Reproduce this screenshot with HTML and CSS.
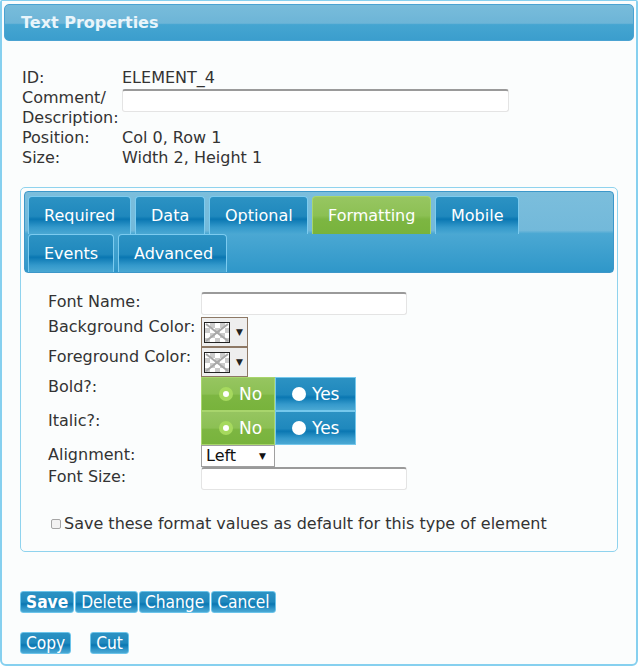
FILE: index.html
```html
<!DOCTYPE html>
<html lang="en">
<head>
  <meta charset="UTF-8">
  <title>Text Properties</title>
  <link rel="stylesheet" href="styles.css">
</head>
<body>
  <div class="dialog">
    <div class="titlebar">Text Properties</div>

    <div class="info">
      <span>ID:</span><span>ELEMENT_4</span>
      <span>Comment/<br>Description:</span><span><input type="text" class="txt comment"></span>
      <span>Position:</span><span>Col 0, Row 1</span>
      <span>Size:</span><span>Width 2, Height 1</span>
    </div>

    <div class="tabbox">
      <div class="tabbar">
        <a class="tab">Required</a>
        <a class="tab">Data</a>
        <a class="tab">Optional</a>
        <a class="tab on">Formatting</a>
        <a class="tab">Mobile</a>
        <span class="break"></span>
        <a class="tab">Events</a>
        <a class="tab">Advanced</a>
      </div>

      <div class="form">
        <label>Font Name:</label>
        <div><input type="text" class="txt field"></div>

        <label>Background Color:</label>
        <div><span class="swatch"><span class="chip"><svg width="24" height="19" viewBox="0 0 24 19"><line x1="1" y1="1" x2="23" y2="18" stroke="#a8a8a8" stroke-width="2"/><line x1="23" y1="1" x2="1" y2="18" stroke="#a8a8a8" stroke-width="2"/></svg></span><span class="caret">&#9660;</span></span></div>

        <label>Foreground Color:</label>
        <div><span class="swatch"><span class="chip"><svg width="24" height="19" viewBox="0 0 24 19"><line x1="1" y1="1" x2="23" y2="18" stroke="#a8a8a8" stroke-width="2"/><line x1="23" y1="1" x2="1" y2="18" stroke="#a8a8a8" stroke-width="2"/></svg></span><span class="caret">&#9660;</span></span></div>

        <label>Bold?:</label>
        <div class="toggle"><span class="opt no"><i class="dot"></i>No</span><span class="opt yes"><i class="dot"></i>Yes</span></div>

        <label>Italic?:</label>
        <div class="toggle"><span class="opt no"><i class="dot"></i>No</span><span class="opt yes"><i class="dot"></i>Yes</span></div>

        <label>Alignment:</label>
        <div><span class="select">Left<span class="arr">&#9660;</span></span></div>

        <label>Font Size:</label>
        <div><input type="text" class="txt field"></div>
      </div>

      <div class="default"><span class="check"></span>Save these format values as default for this type of element</div>
    </div>

    <div class="actions">
      <a class="btn bold">Save</a><a class="btn">Delete</a><a class="btn">Change</a><a class="btn">Cancel</a>
    </div>
    <div class="actions second">
      <a class="btn">Copy</a><a class="btn">Cut</a>
    </div>
  </div>
</body>
</html>
```

FILE: styles.css
```css
* {margin: 0; padding: 0; box-sizing: border-box;}
body {
  background: #fff;
  font-family: "DejaVu Sans", Verdana, sans-serif;
  font-size: 16px;
  color: #333;
}
.dialog {
  width: 638px;
  height: 666px;
  border: 2px solid #86d0ef;
  border-top-width: 1px;
  border-radius: 2px 2px 6px 6px;
  background: #fbfdfd;
  padding: 3px 2px 0;
}
.titlebar {
  height: 37px;
  border: 1px solid #4aa3d2;
  border-radius: 5px;
  background: linear-gradient(#78bcdb, #6db5d7 52%, #45a5d1 56%, #3b9ecd);
  color: #e9f5fb;
  font-weight: bold;
  font-size: 16px;
  line-height: 36px;
  padding-left: 16px;
}
.info {
  display: grid;
  grid-template-columns: 100px auto;
  line-height: 20px;
  margin: 27px 0 0 18px;
}
.txt {
  display: block;
  border: 1px solid #e4e4e4;
  border-top: 2px solid #9a9a9a;
  border-radius: 3px;
  background: #fff;
  height: 23px;
}
.comment {
  width: 387px;
  margin-top: 1px;
}
.tabbox {
  margin: 19px 0 0 16px;
  width: 598px;
  height: 365px;
  border: 1px solid #8fd3ee;
  border-radius: 5px;
  padding: 3px;
}
.tabbar {
  display: flex;
  flex-wrap: wrap;
  column-gap: 4px;
  height: 82px;
  border: 1px solid #3c97c9;
  border-radius: 4px;
  background: linear-gradient(#7bbedc, #73b9da 48%, #4ba8d3 52%, #2f97c9);
  padding: 4px 0 0 3px;
}
.break {
  flex-basis: 100%;
  height: 0;
}
.tab {
  display: block;
  height: 38px;
  padding: 0 15px;
  border: 1px solid #7ccbef;
  border-bottom: 0;
  border-radius: 4px 4px 0 0;
  background: linear-gradient(#2c92c3, #1f88bd 52%, #0a77b2 60%, #3499cb 82%, #4aa8d3);
  color: #fff;
  font-size: 16px;
  line-height: 38px;
}
.tab:nth-child(1) {width: 103px;}
.tab:nth-child(2) {width: 70px;}
.tab:nth-child(3) {width: 99px;}
.tab:nth-child(4) {width: 119px;}
.tab:nth-child(5) {width: 84px;}
.tab:nth-child(7) {width: 86px;}
.tab:nth-child(8) {width: 109px;}
.tab.on {
  border-color: #a8d56c;
  background: linear-gradient(#97c661, #8cc054 50%, #7db642 60%, #78b33c);
}
.form {
  display: grid;
  grid-template-columns: 153px auto;
  align-items: start;
  line-height: 20px;
  padding: 19px 0 0 24px;
}
.field {
  width: 206px;
  margin-bottom: 2px;
}
.swatch {
  display: flex;
  align-items: center;
  width: 47px;
  height: 30px;
  border: 1px solid #8d7865;
  background: #eee;
  padding-left: 2px;
}
.chip {
  width: 26px;
  height: 21px;
  border: 1px solid #222;
  background-color: #fff;
  background-image: linear-gradient(45deg, #ccc 25%, transparent 25%, transparent 75%, #ccc 75%),
    linear-gradient(45deg, #ccc 25%, transparent 25%, transparent 75%, #ccc 75%);
  background-size: 10px 10px;
  background-position: 0 0, 5px 5px;
}
.chip svg {display: block;}
.caret {
  font-size: 9px;
  color: #222;
  margin-left: 6px;
}
.toggle {
  display: flex;
  height: 34px;
  font-size: 17px;
  color: #fff;
}
.opt {
  display: flex;
  align-items: center;
  height: 34px;
  border: 1px solid #76c8ec;
}
.opt.no {
  width: 74px;
  padding-left: 17px;
  border-color: #a8d56c;
  background: linear-gradient(#96c560, #8cc054 50%, #7db642 54%, #78b33c);
}
.opt.yes {
  width: 81px;
  padding-left: 16px;
  background: linear-gradient(#2c92c3, #1f88bd 52%, #0a77b2 60%, #3499cb 82%, #4aa8d3);
}
.dot {
  width: 14px;
  height: 14px;
  border-radius: 50%;
  background: #fff;
  margin-right: 6px;
}
.no .dot {
  background: #fff;
  border: 4px solid #a6d95e;
}
.select {
  display: flex;
  align-items: center;
  width: 74px;
  height: 22px;
  border: 1px solid #a0a0a0;
  background: #fff;
  color: #111;
  padding-left: 4px;
}
.arr {
  font-size: 9px;
  margin-left: auto;
  margin-right: 8px;
}
.default {
  display: flex;
  align-items: center;
  margin: 22px 0 0 27px;
}
.check {
  width: 10px;
  height: 10px;
  border: 1px solid #a5a5a5;
  border-radius: 2px;
  background: #f2f2f2;
  margin-right: 3px;
}
.actions {
  display: flex;
  gap: 1px;
  margin: 39px 0 0 16px;
}
.actions.second {
  gap: 19px;
  margin-top: 19px;
}
.btn {
  display: block;
  height: 22px;
  padding: 0 5px;
  border: 1px solid #6cc4ea;
  border-radius: 3px;
  background: linear-gradient(#2c92c3, #1f88bd 50%, #0a77b2 60%, #3499cb 85%, #4aa8d3);
  color: #fff;
  font-family: "DejaVu Sans Condensed", "DejaVu Sans", sans-serif;
  font-size: 17.2px;
  line-height: 20px;
}
.btn.bold {font-weight: bold;}
```
